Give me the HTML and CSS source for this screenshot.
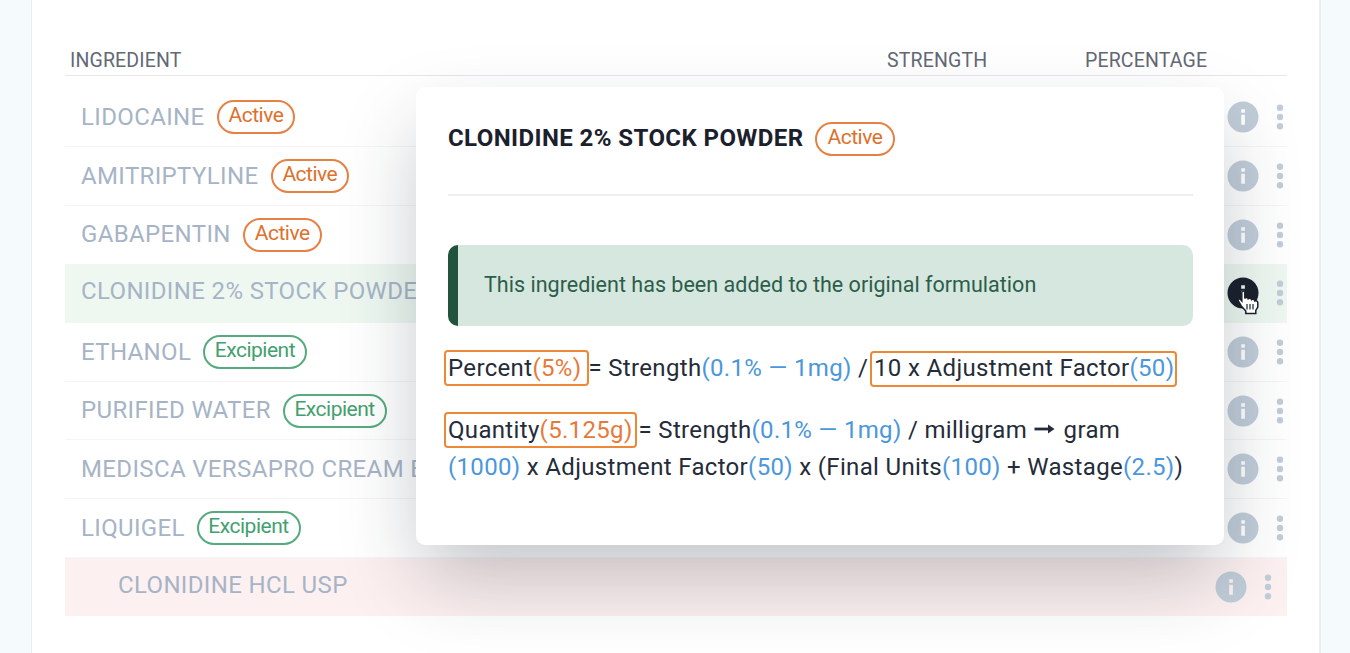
FILE: index.html
```html
<!DOCTYPE html>
<html lang="en">
<head>
<meta charset="utf-8">
<title>Ingredients</title>
<link rel="stylesheet" href="styles.css">
</head>
<body>
<svg width="0" height="0" class="defs">
  <symbol id="info" viewBox="0 0 32 32"><path fill-rule="evenodd" fill="currentColor" d="M16 .5a15.5 15.5 0 1 0 0 31a15.500 15.500 0 1 0 0-31zM14.200 8.300h3.700v3.400h-3.700zM14.200 13.700h3.700v10h-3.700z"/></symbol>
  <symbol id="dots" viewBox="0 0 8 26"><g fill="currentColor"><circle cx="4" cy="3.8" r="3.2"/><circle cx="4" cy="13" r="3.2"/><circle cx="4" cy="22.2" r="3.2"/></g></symbol>
</svg>
<main class="card">
  <header class="head"><span class="h-ing">INGREDIENT</span><span class="h-str">STRENGTH</span><span class="h-pct">PERCENTAGE</span></header>
  <section class="rows">
    <div class="row"><span class="name">LIDOCAINE</span><span class="badge active">Active</span><svg class="info"><use href="#info"/></svg><svg class="dots"><use href="#dots"/></svg></div>
    <div class="row"><span class="name">AMITRIPTYLINE</span><span class="badge active">Active</span><svg class="info"><use href="#info"/></svg><svg class="dots"><use href="#dots"/></svg></div>
    <div class="row"><span class="name">GABAPENTIN</span><span class="badge active">Active</span><svg class="info"><use href="#info"/></svg><svg class="dots"><use href="#dots"/></svg></div>
    <div class="row added"><span class="name">CLONIDINE 2% STOCK POWDE</span><svg class="info dark"><use href="#info"/></svg><svg class="dots"><use href="#dots"/></svg></div>
    <div class="row"><span class="name">ETHANOL</span><span class="badge excipient">Excipient</span><svg class="info"><use href="#info"/></svg><svg class="dots"><use href="#dots"/></svg></div>
    <div class="row"><span class="name">PURIFIED WATER</span><span class="badge excipient">Excipient</span><svg class="info"><use href="#info"/></svg><svg class="dots"><use href="#dots"/></svg></div>
    <div class="row"><span class="name">MEDISCA VERSAPRO CREAM B</span><svg class="info"><use href="#info"/></svg><svg class="dots"><use href="#dots"/></svg></div>
    <div class="row"><span class="name">LIQUIGEL</span><span class="badge excipient">Excipient</span><svg class="info"><use href="#info"/></svg><svg class="dots"><use href="#dots"/></svg></div>
    <div class="row removed"><span class="name">CLONIDINE HCL USP</span><svg class="info"><use href="#info"/></svg><svg class="dots"><use href="#dots"/></svg></div>
  </section>
</main>
<aside class="popover">
  <div class="title"><h2>CLONIDINE 2% STOCK POWDER</h2><span class="badge active">Active</span></div>
  <div class="notice">This ingredient has been added to the original formulation</div>
  <p class="formula"><span class="mark m1">Percent<b class="o">(5%)</b></span>= Strength<b>(0.1% — 1mg)</b> / <span class="mark m2">10 x Adjustment Factor<b>(50)</b></span></p>
  <p class="formula second"><span class="mark m3">Quantity<b class="o">(5.125g)</b></span>= Strength<b>(0.1% — 1mg)</b> / milligram <svg class="arrow" viewBox="0 0 22 14"><path d="M1 7h16" stroke="currentColor" stroke-width="2.8"/><path d="M14.500 2.500l6.500 4.500-6.500 4.500z" fill="currentColor"/></svg> gram<br><b>(1000)</b> x Adjustment Factor<b>(50)</b> x (Final Units<b>(100)</b> + Wastage<b>(2.5)</b>)</p>
</aside>
<svg class="cursor" viewBox="0 0 22 25"><path d="M4.800 2.400c0-2 3-2 3 0v6.200c.5-1.500 3-1.500 3.400.2 1-1 3-.6 3.300.8 1-.8 3.100-.3 3.300 1.400 1.800-.5 3 .4 3 2v4l-2 3.500v3h-10v-2.500l-4.500-5-3-5c-.8-1.600 1-2.700 2.200-1.500L4.800 11z" fill="#fff" stroke="#1a202c" stroke-width="1.500"/><path d="M10 14v5.500M13 14v5.500M16 14v5.500" stroke="#1a202c" stroke-width="1.200"/></svg>
</body>
</html>
```
FILE: styles.css
```css
* { box-sizing: border-box; }
body { margin: 0; width: 1350px; height: 653px; overflow: hidden; background: #f5fafd; font-family: Roboto, "Liberation Sans", sans-serif; color: #252c39; }
.defs { position: absolute; }
.card { width: 1290px; height: 653px; margin-left: 31px; padding: 0 33px; background: #fff; border: solid #e9eef0; border-width: 0 2px 0 1px; }
.head { display: flex; height: 76px; padding: 48px 0 0 5px; border-bottom: 1px solid #e6e7e9; font-size: 19.5px; letter-spacing: .15px; line-height: 25px; color: #626975; width: 1222px; }
.h-ing { width: 817px; }
.h-str { width: 198px; }
.rows { padding-top: 12.6px; width: 1222px; }
.row { display: flex; align-items: center; height: 58.65px; padding: 0 3px 0 16px; border-bottom: 1px solid #f4f5f6; color: #c1cdd9; }
.name { font-size: 24px; letter-spacing: .36px; line-height: 28px; margin-top: -.6px; color: #a6b4c6; white-space: nowrap; }
.badge { display: block; height: 34px; margin: 0 0 0 12.5px; padding: 0 10px 0 9.500px; border: 2px solid; border-radius: 17px; font-size: 21px; letter-spacing: -.5px; line-height: 27px; flex: none; }
.active { color: #dd712c; border-color: #e58142; }
.excipient { color: #43a06f; border-color: #56ab7e; }
.row .excipient { margin-left: 12px; }
.info { width: 32px; height: 32px; margin-left: auto; flex: none; }
.dots { width: 8px; height: 26px; margin-left: 17px; flex: none; }
.dark { color: #1a202c; }
.added { background: #eef8f1; border-color: #eef8f1; }
.added .name, .removed .name { margin-top: -4px; }
.removed { background: #fdf0f0; padding: 0 15px 0 53px; border-color: #fdf0f0; }
.popover { position: absolute; left: 416px; top: 87px; width: 808px; height: 458px; padding: 0 31px 0 32px; border-radius: 9px; background: #fff; box-shadow: 0 36px 80px -6px rgba(26, 38, 50, .27); }
.title { display: flex; align-items: center; height: 109px; padding-bottom: 7px; border-bottom: 2px solid #edeeef; }
h2 { margin: 0; padding-top: 1px; color: #1a202c; font-size: 24px; letter-spacing: .41px; line-height: 28px; font-weight: 700; white-space: nowrap; }
.title .badge { margin-top: 3px; margin-left: 12px; padding: 0 11px 0 10px; }
.notice { height: 81px; margin-top: 49px; padding-left: 26px; border-left: 10px solid #22543d; border-radius: 10px; background: #d6e7df; color: #2b5e49; font-size: 21.5px; letter-spacing: .02px; line-height: 79px; }
.formula { margin: 24px 0 0; font-size: 24px; letter-spacing: .34px; line-height: 37px; white-space: nowrap; }
.formula.second { margin-top: 25px; letter-spacing: .33px; }
b { font-weight: 400; color: #4a97dc; }
b.o { color: #e67a3a; }
.mark { display: inline-block; height: 36px; line-height: 33px; padding: 0 2px; border: 2px solid #ed8936; border-radius: 4px; margin: 0 0 -2px -4px; vertical-align: baseline; }
.m1 { padding-right: 6px; margin-right: -1px; }
.m2 { margin-left: -4.500px; padding-right: 1px; line-height: 31px; }
.m3 { margin-right: 2px; }
.arrow { width: 23px; height: 14px; margin-right: 1px; vertical-align: 2px; }
.cursor { position: absolute; left: 1237px; top: 290px; width: 22px; height: 25px; }
```
